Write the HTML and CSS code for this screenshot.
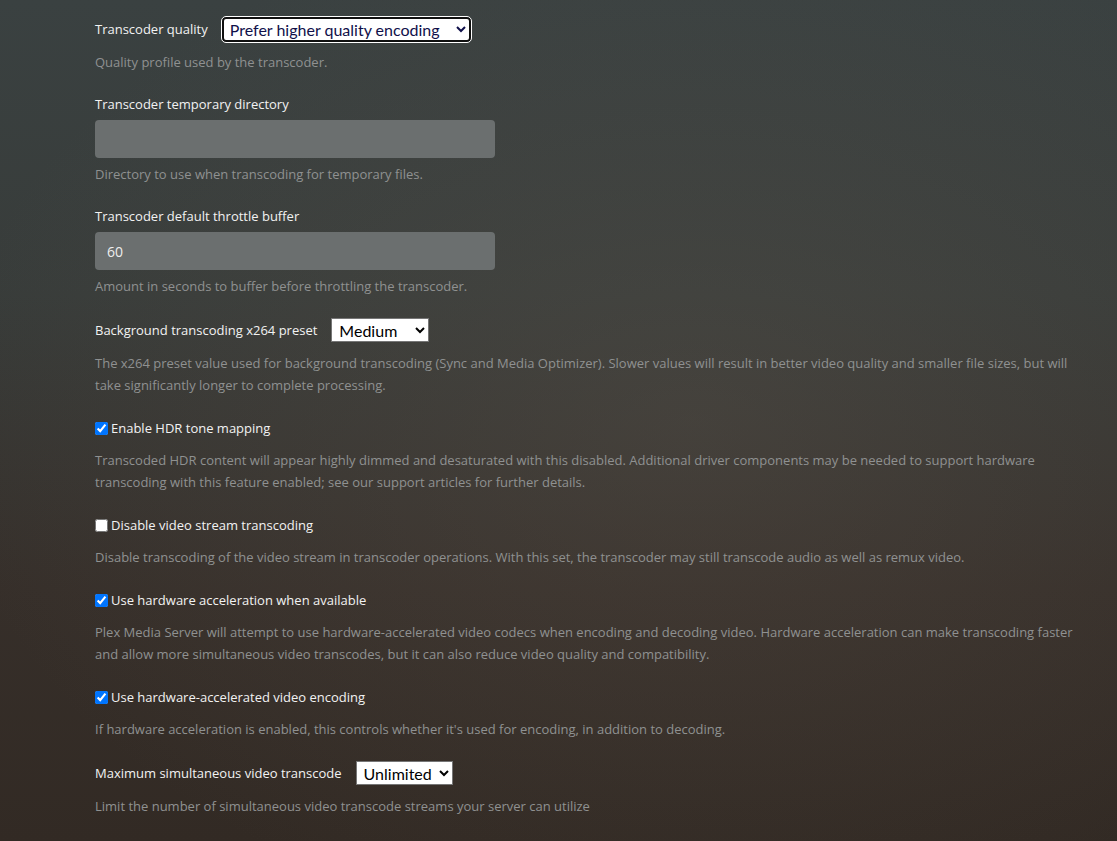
FILE: index.html
```html
<!DOCTYPE html>
<html>
	<head>
		<meta charset="utf-8">
		<title>Transcoder settings</title>
		<link rel="stylesheet" href="styles.css">
	</head>
	<body>
		<div class="settings">
			<div class="setting">
				<div class="row">
					<label class="label" for="quality">Transcoder quality</label>
					<select id="quality" class="select select-quality focused">
						<option>Prefer higher quality encoding</option>
					</select>
				</div>
				<p class="desc">Quality profile used by the transcoder.</p>
			</div>

			<div class="setting">
				<label class="label block">Transcoder temporary directory</label>
				<input class="input" type="text" value="">
				<p class="desc desc-input">Directory to use when transcoding for temporary files.</p>
			</div>

			<div class="setting">
				<label class="label block">Transcoder default throttle buffer</label>
				<input class="input" type="text" value="60">
				<p class="desc desc-input">Amount in seconds to buffer before throttling the transcoder.</p>
			</div>

			<div class="setting">
				<div class="row">
					<label class="label">Background transcoding x264 preset</label>
					<select class="select select-preset">
						<option>Medium</option>
					</select>
				</div>
				<p class="desc">The x264 preset value used for background transcoding (Sync and Media Optimizer). Slower values will result in better video quality and smaller file sizes, but will take significantly longer to complete processing.</p>
			</div>

			<div class="setting">
				<label class="row check">
					<input type="checkbox" checked>
					<span class="label">Enable HDR tone mapping</span>
				</label>
				<p class="desc">Transcoded HDR content will appear highly dimmed and desaturated with this disabled. Additional driver components may be needed to support hardware transcoding with this feature enabled; see our support articles for further details.</p>
			</div>

			<div class="setting">
				<label class="row check">
					<input type="checkbox">
					<span class="label">Disable video stream transcoding</span>
				</label>
				<p class="desc">Disable transcoding of the video stream in transcoder operations. With this set, the transcoder may still transcode audio as well as remux video.</p>
			</div>

			<div class="setting">
				<label class="row check">
					<input type="checkbox" checked>
					<span class="label">Use hardware acceleration when available</span>
				</label>
				<p class="desc">Plex Media Server will attempt to use hardware-accelerated video codecs when encoding and decoding video. Hardware acceleration can make transcoding faster and allow more simultaneous video transcodes, but it can also reduce video quality and compatibility.</p>
			</div>

			<div class="setting">
				<label class="row check">
					<input type="checkbox" checked>
					<span class="label">Use hardware-accelerated video encoding</span>
				</label>
				<p class="desc">If hardware acceleration is enabled, this controls whether it's used for encoding, in addition to decoding.</p>
			</div>

			<div class="setting">
				<div class="row">
					<label class="label">Maximum simultaneous video transcode</label>
					<select class="select select-max">
						<option>Unlimited</option>
					</select>
				</div>
				<p class="desc">Limit the number of simultaneous video transcode streams your server can utilize</p>
			</div>
		</div>
	</body>
</html>
```

FILE: styles.css
```css
* {
	margin: 0;
	padding: 0;
	box-sizing: border-box;
}

html,
body {
	height: 100%;
	overflow: hidden;
}

body {
	font-family: "Open Sans", "Liberation Sans", sans-serif;
	font-size: 13px;
	color: #eee;
	background:
		radial-gradient(ellipse 750px 520px at 62% 50%, rgba(100, 90, 80, .3), rgba(100, 90, 80, 0)),
		linear-gradient(to bottom, #3a4141 0%, #383c3a 35%, #362f2a 70%, #322a24 100%);
}

.settings {
	padding: 17px 0 0 95px;
	width: 1090px;
}

.setting {
	margin-bottom: 21px;
}

.row {
	display: flex;
	align-items: center;
	height: 24px;
}

.row.check {
	height: 22px;
	cursor: pointer;
}

.row.check input {
	width: 13px;
	height: 13px;
	margin: 0 3px 0 0;
	accent-color: #0075ff;
}

.label {
	font-size: 13px;
	line-height: 20px;
	color: #f2f2f2;
}

.label.block {
	display: block;
}

.select {
	height: 24px;
	margin-left: 14px;
	padding: 0 0 0 3px;
	font-family: Lato, "Open Sans", sans-serif;
	font-size: 16px;
	line-height: 18px;
	color: #000;
	background-color: #fff;
	border: 1px solid #767676;
	border-radius: 0;
}

.select.focused {
	height: 25px;
	padding-left: 2px;
	color: #10104a;
	border: 2px solid #101010;
	border-radius: 4px;
	outline: 1px solid #fff;
}

.select-quality {
	width: 249px;
}

.select-preset {
	width: 98px;
}

.select-max {
	width: 97px;
}

.input {
	display: block;
	width: 400px;
	height: 38px;
	margin-top: 6px;
	padding: 0 12px;
	font-family: "Open Sans", "Liberation Sans", sans-serif;
	font-size: 14px;
	color: #eee;
	background-color: #6b6f6f;
	border: none;
	border-radius: 4px;
	outline: none;
}

.desc {
	margin-top: 10px;
	font-size: 13px;
	line-height: 22px;
	color: #8f9191;
}

.desc-input {
	margin-top: 5px;
}
```
